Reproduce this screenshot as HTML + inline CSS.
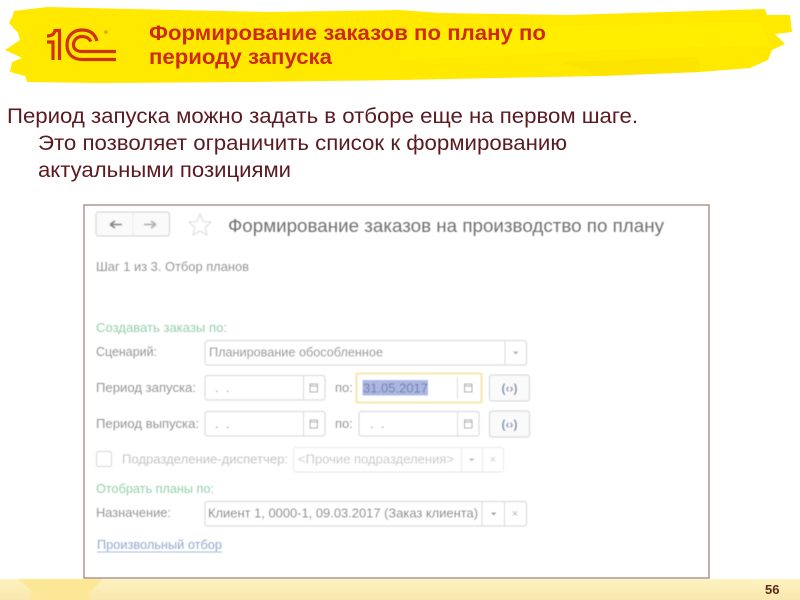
<!DOCTYPE html>
<html><head><meta charset="utf-8"><style>
html,body{margin:0;padding:0;background:#fff;width:800px;height:600px;overflow:hidden}
svg{display:block;font-family:"Liberation Sans",sans-serif}
.f{fill:#fff;stroke:#dcdcdc;stroke-width:1.2}
.d{stroke:#d8d8d8;stroke-width:1}
.l{fill:#959595;font-size:13px}
.v{fill:#8e8e8e;font-size:13px}
.g{fill:#93cfac;font-size:13px}
.i{fill:none;stroke:#a4a4a4;stroke-width:1}
</style></head><body>
<svg width="800" height="600" viewBox="0 0 800 600" xmlns="http://www.w3.org/2000/svg">
<defs>
<linearGradient id="ft" x1="0" y1="0" x2="0" y2="1"><stop offset="0" stop-color="#fdf2c0"/><stop offset="1" stop-color="#f9e8ae"/></linearGradient>
<filter id="b1"><feGaussianBlur stdDeviation="0.55"/></filter>
<filter id="b2"><feGaussianBlur stdDeviation="0.35"/></filter>
</defs>
<g filter="url(#b2)">
<polygon fill="#ffe900" points="14,11 47,7 130,9 270,12 400,10 440,13 570,15 765,9 767,15 790,15 792,32 775,34 785,44 772,50 768,60 750,68 700,72 600,76 400,80 250,82 100,83 27,82 25,76 10,72 12,62 22,58 5,50 20,40 18,33 9,23 13,15"/>
<polygon fill="#ffee00" points="400,30 760,22 770,45 600,50 400,60"/>
<polygon fill="#fde400" points="560,62 698,57 700,72 600,76"/>
</g>
<g filter="url(#b2)">
<g fill="none" stroke="#d0320f" stroke-width="3.2">
<path d="M59.500,60 V30.500 H55 Q54,36 47,36"/>
<path d="M53,60 V42 H47"/>
<path d="M97,41 C95,34 90,30 82,30 C73,30 67,36 67,45 C67,54 73,59.500 82,59.500 L116,59.500"/>
<path d="M91,41.500 C89,38 86,36.500 82,36.500 C77,36.500 73.500,40 73.500,45 C73.500,49 77,51.500 82,51.500 L116,51.500"/>
</g>
<circle cx="106" cy="32" r="2" fill="#e8b000"/>
</g>
<g fill="#cf2a0c" font-weight="bold" font-size="21.500px">
<text x="149" y="40" textLength="397" lengthAdjust="spacingAndGlyphs">Формирование заказов по плану по</text>
<text x="149" y="64" textLength="183" lengthAdjust="spacingAndGlyphs">периоду запуска</text>
</g>
<g fill="#5a1a20" font-size="21.700px">
<text x="7" y="123" textLength="631" lengthAdjust="spacingAndGlyphs">Период запуска можно задать в отборе еще на первом шаге.</text>
<text x="38" y="150" textLength="529" lengthAdjust="spacingAndGlyphs">Это позволяет ограничить список к формированию</text>
<text x="38" y="177" textLength="253" lengthAdjust="spacingAndGlyphs">актуальными позициями</text>
</g>
<rect x="0" y="579" width="800" height="21" fill="url(#ft)"/>
<polygon points="18,579 103,579 88,594 92,600 30,600 33,592" fill="#fbe795" filter="url(#b1)"/>
<text x="765" y="594" fill="#5e2a18" font-size="13px" font-weight="bold">56</text>
<rect x="84" y="205" width="625" height="373" fill="#fff" stroke="#9a7b72" stroke-width="1.200"/>
<g filter="url(#b1)">
<rect x="96" y="212" width="73.500" height="24" rx="2.500" fill="#fafafa" stroke="#d8d8d8" stroke-width="1.200"/>
<line x1="133" y1="213" x2="133" y2="235" stroke="#eeeeee"/>
<path d="M110,224.500 H122 M110,224.500 L115,221 M110,224.500 L115,228" fill="none" stroke="#8a8a8a" stroke-width="1.800"/>
<path d="M144,224.500 H156 M156,224.500 L151,221 M156,224.500 L151,228" fill="none" stroke="#b4b4b4" stroke-width="1.800"/>
<polygon points="200,214 203.200,221.500 211,222.300 205,227.500 207,235 200,231 193,235 195,227.500 189,222.300 196.800,221.500" fill="#fff" stroke="#dcdcdc" stroke-width="1.100"/>
<text x="228" y="232" fill="#6f6f6f" font-size="18px" textLength="436" lengthAdjust="spacingAndGlyphs">Формирование заказов на производство по плану</text>
<text x="96" y="271" class="l" textLength="153" lengthAdjust="spacingAndGlyphs">Шаг 1 из 3. Отбор планов</text>
<text x="96" y="332" class="g" textLength="131" lengthAdjust="spacingAndGlyphs">Создавать заказы по:</text>
<text x="96" y="356" class="l" textLength="61" lengthAdjust="spacingAndGlyphs">Сценарий:</text>
<rect x="205" y="340.500" width="321.500" height="24.500" rx="2.500" class="f"/>
<line x1="505" y1="341" x2="505" y2="365" class="d"/>
<polygon points="513,351.500 518.500,351.500 515.700,354.500" fill="#aaa"/>
<text x="209" y="356.500" class="v" textLength="174" lengthAdjust="spacingAndGlyphs">Планирование обособленное</text>
<text x="96" y="392" class="l" textLength="100" lengthAdjust="spacingAndGlyphs">Период запуска:</text>
<rect x="205" y="375.500" width="120" height="24.500" rx="2.500" class="f"/>
<line x1="303.500" y1="376" x2="303.500" y2="400" class="d"/>
<text x="215" y="392" class="v">.&#160;&#160;.</text>
<rect x="310" y="384" width="7.500" height="8" class="i"/><line x1="310" y1="386" x2="317.500" y2="386" stroke="#a4a4a4"/>
<text x="335" y="392" class="l">по:</text>
<rect x="356.500" y="373.500" width="125" height="29" rx="1" fill="#fff" stroke="#f7e8a8" stroke-width="2"/>
<line x1="457.500" y1="377" x2="457.500" y2="399" class="d"/>
<rect x="362.500" y="380" width="65.500" height="15.500" fill="#aab7e3"/>
<text x="363" y="392.500" fill="#7680a6" font-size="13px" textLength="65" lengthAdjust="spacingAndGlyphs">31.05.2017</text>
<rect x="464.500" y="384" width="7.500" height="8" class="i"/><line x1="464.500" y1="386" x2="472" y2="386" stroke="#a4a4a4"/>
<rect x="489.500" y="375" width="40" height="26" rx="2.500" fill="#fafafa" stroke="#dadada" stroke-width="1.200"/>
<text x="509.500" y="392.500" fill="#7d8ea8" font-size="12px" font-weight="bold" text-anchor="middle">(‹›)</text>
<text x="96" y="428" class="l" textLength="103" lengthAdjust="spacingAndGlyphs">Период выпуска:</text>
<rect x="205" y="411.500" width="120" height="24.500" rx="2.500" class="f"/>
<line x1="303.500" y1="412" x2="303.500" y2="436" class="d"/>
<text x="215" y="428" class="v">.&#160;&#160;.</text>
<rect x="310" y="420" width="7.500" height="8" class="i"/><line x1="310" y1="422" x2="317.500" y2="422" stroke="#a4a4a4"/>
<text x="335" y="428" class="l">по:</text>
<rect x="359" y="411.500" width="120" height="24.500" rx="2.500" class="f"/>
<line x1="457.500" y1="412" x2="457.500" y2="436" class="d"/>
<text x="370" y="428" class="v">.&#160;&#160;.</text>
<rect x="464.500" y="420" width="7.500" height="8" class="i"/><line x1="464.500" y1="422" x2="472" y2="422" stroke="#a4a4a4"/>
<rect x="489.500" y="411" width="40" height="26" rx="2.500" fill="#fafafa" stroke="#dadada" stroke-width="1.200"/>
<text x="509.500" y="428.500" fill="#7d8ea8" font-size="12px" font-weight="bold" text-anchor="middle">(‹›)</text>
<rect x="96.500" y="451.500" width="15" height="15" rx="2" fill="#fff" stroke="#dcdcdc" stroke-width="1.200"/>
<text x="122" y="463.500" fill="#c4c4c4" font-size="13px" textLength="166" lengthAdjust="spacingAndGlyphs">Подразделение-диспетчер:</text>
<rect x="293.500" y="447.500" width="210" height="24.500" rx="2.500" fill="#fff" stroke="#ececec" stroke-width="1.200"/>
<line x1="461.500" y1="448" x2="461.500" y2="472" stroke="#e8e8e8"/>
<line x1="482.500" y1="448" x2="482.500" y2="472" stroke="#e8e8e8"/>
<polygon points="469,458.500 474.500,458.500 471.700,461.500" fill="#bbb"/>
<text x="493" y="463" fill="#c4c4c4" font-size="11px" text-anchor="middle">×</text>
<text x="298" y="463.500" fill="#c8c8c8" font-size="13px" textLength="156" lengthAdjust="spacingAndGlyphs">&lt;Прочие подразделения&gt;</text>
<text x="96" y="493" class="g" textLength="118" lengthAdjust="spacingAndGlyphs">Отобрать планы по:</text>
<text x="96" y="517" class="l" textLength="75" lengthAdjust="spacingAndGlyphs">Назначение:</text>
<rect x="205" y="501.500" width="321.500" height="24.500" rx="2.500" class="f"/>
<line x1="482" y1="502" x2="482" y2="526" class="d"/>
<line x1="504.500" y1="502" x2="504.500" y2="526" class="d"/>
<polygon points="491,512.500 496.500,512.500 493.700,515.500" fill="#999"/>
<text x="515" y="517" fill="#aaa" font-size="11px" text-anchor="middle">×</text>
<text x="208" y="517.500" fill="#808080" font-size="13px" textLength="270" lengthAdjust="spacingAndGlyphs">Клиент 1, 0000-1, 09.03.2017 (Заказ клиента)</text>
<text x="97" y="549" fill="#93a8cf" font-size="13px" textLength="125" lengthAdjust="spacingAndGlyphs">Произвольный отбор</text>
<line x1="97" y1="552" x2="222" y2="552" stroke="#abbcdc"/>
</g>
</svg>
</body></html>
